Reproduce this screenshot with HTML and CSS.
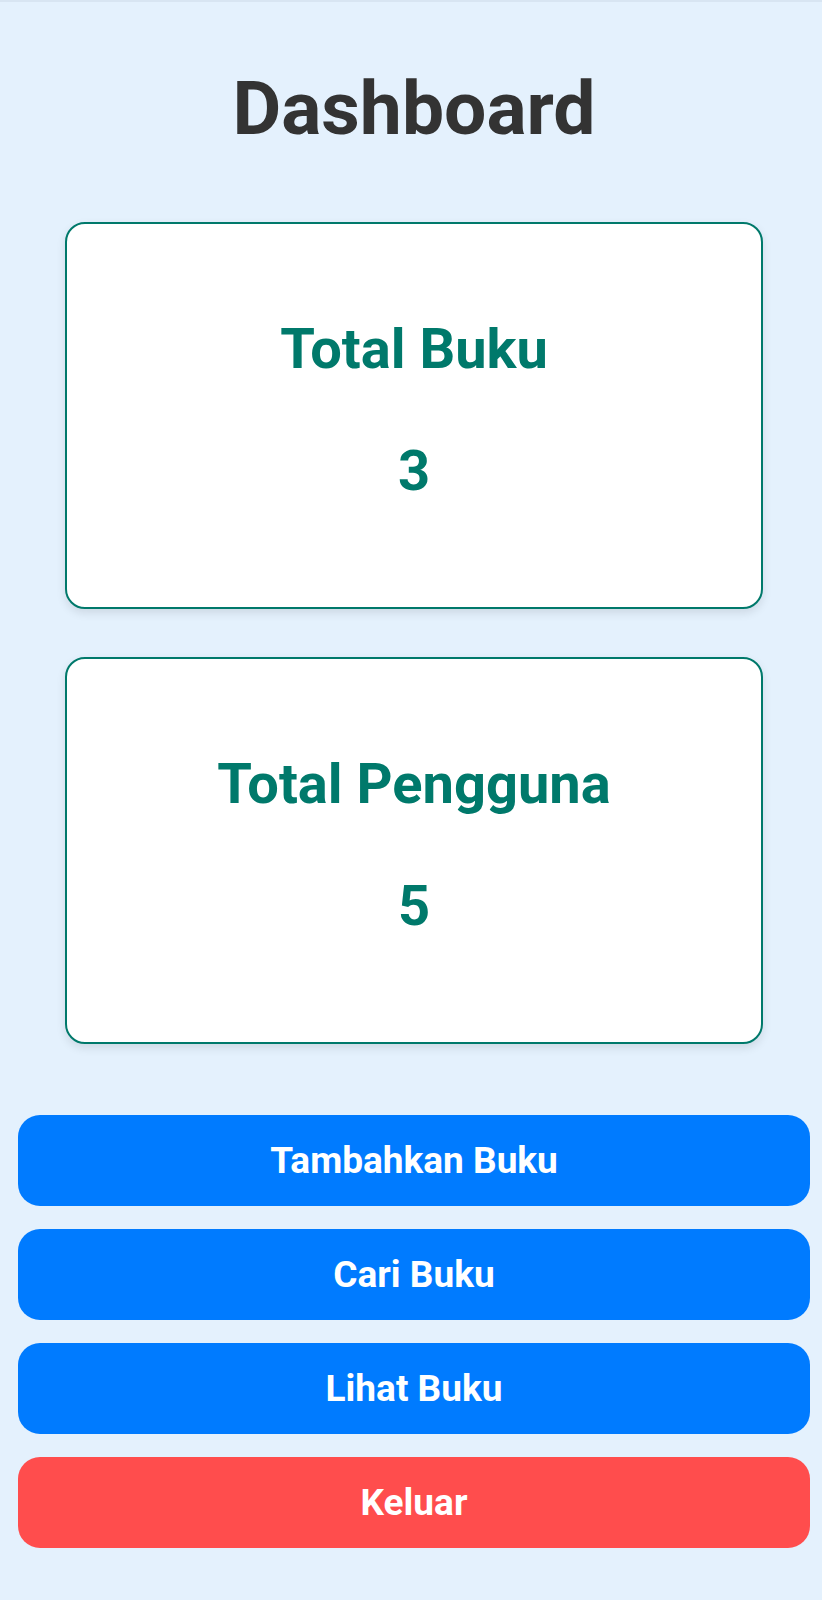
FILE: index.html
```html
<!DOCTYPE html>
<html lang="id">
<head>
<meta charset="utf-8">
<title>Dashboard</title>
<link rel="stylesheet" href="styles.css">
</head>
<body>
<div class="page">
  <h1 class="title">Dashboard</h1>
  <div class="cards">
    <div class="card">
      <h2 class="card-label">Total Buku</h2>
      <p class="card-value">3</p>
    </div>
    <div class="card">
      <h2 class="card-label">Total Pengguna</h2>
      <p class="card-value">5</p>
    </div>
  </div>
  <div class="actions">
    <button class="btn btn-primary">Tambahkan Buku</button>
    <button class="btn btn-primary">Cari Buku</button>
    <button class="btn btn-primary">Lihat Buku</button>
    <button class="btn btn-danger">Keluar</button>
  </div>
</div>
</body>
</html>
```
FILE: styles.css
```css
html, body {
  margin: 0;
  padding: 0;
  background: #e4f1fd;
}
body {
  font-family: Roboto, "Liberation Sans", Arial, sans-serif;
  min-height: 1600px;
}
.page {
  border-top: 2px solid #d8e5f2;
  padding: 0 12px 40px 18px;
  display: flex;
  flex-direction: column;
}
.title {
  margin: 61px 0 0;
  font-size: 75px;
  line-height: 90px;
  font-weight: 700;
  color: #333333;
  text-align: center;
}
.cards {
  margin: 69px 47px 0;
  display: flex;
  flex-direction: column;
  gap: 48px;
}
.card {
  background: #ffffff;
  border: 2px solid #00796b;
  border-radius: 20px;
  padding: 92px 20px 103px;
  box-shadow: 0 4px 10px rgba(0, 0, 0, 0.1);
  text-align: center;
  color: #00796b;
}
.card-label {
  margin: 0;
  font-size: 56px;
  line-height: 66px;
  font-weight: 700;
}
.card-value {
  margin: 56px 0 0;
  font-size: 56px;
  line-height: 66px;
  font-weight: 700;
}
.actions {
  margin-top: 71px;
  display: flex;
  flex-direction: column;
  gap: 23px;
}
.btn {
  display: block;
  width: 100%;
  height: 91px;
  border: none;
  border-radius: 22px;
  color: #ffffff;
  font-family: Roboto, "Liberation Sans", Arial, sans-serif;
  font-size: 37px;
  font-weight: 700;
  padding: 0;
  cursor: pointer;
}
.btn-primary {
  background: #007bff;
}
.btn-danger {
  background: #ff4d4d;
}
```
